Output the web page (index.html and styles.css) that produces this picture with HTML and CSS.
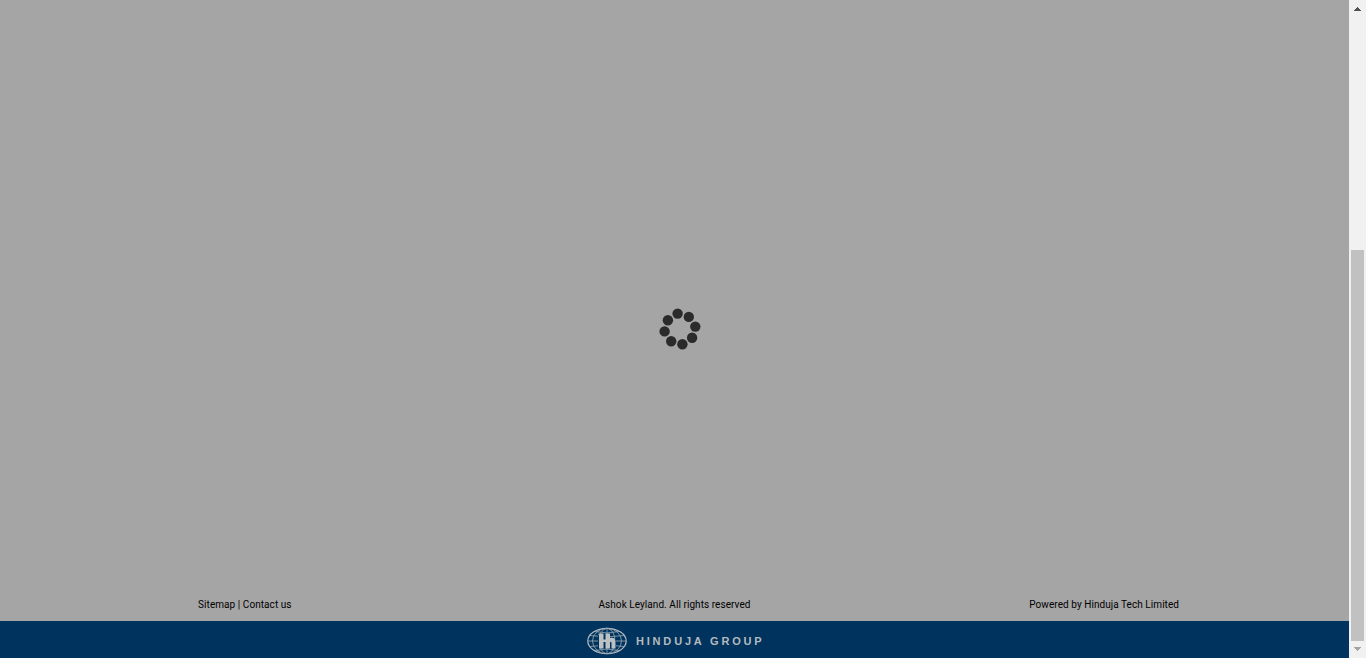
FILE: index.html
```html
<!DOCTYPE html>
<html lang="en">
<head>
<meta charset="utf-8">
<title>Ashok Leyland</title>
<link rel="stylesheet" href="styles.css">
</head>
<body>
<div class="page">
  <main class="content">
    <svg class="spinner" viewBox="0 0 60 60" role="img" aria-label="Loading">
      <circle cx="27.6" cy="13.6" r="5.2"/><circle cx="38.8" cy="16.9" r="5.2"/>
      <circle cx="45.3" cy="26.6" r="5.2"/><circle cx="42.1" cy="37.8" r="5.2"/>
      <circle cx="32.4" cy="44.3" r="5.2"/><circle cx="21.2" cy="41.2" r="5.2"/>
      <circle cx="14.6" cy="31.4" r="5.2"/><circle cx="17.9" cy="20.2" r="5.2"/>
    </svg>
  </main>
  <footer>
    <div class="links">
      <div><a>Sitemap</a> | <a>Contact us</a></div>
      <div>Ashok Leyland. All rights reserved</div>
      <div>Powered by Hinduja Tech Limited</div>
    </div>
    <div class="brand">
      <svg class="globe" viewBox="0 0 40 28">
        <g class="grid">
          <ellipse class="rim" cx="20" cy="14" rx="19.2" ry="12.7"/>
          <ellipse cx="20" cy="14" rx="14.5" ry="12.7"/>
          <ellipse cx="20" cy="14" rx="8" ry="12.7"/>
          <path d="M20 1v26M1 14h38M3 8.5q17 3 34 0M3 19.5q17-3 34 0M8 4.5q12 3 24 0M8 23.5q12-3 24 0"/>
        </g>
        <path class="halo" d="M14 7v14M20 7v14M14 14h6M26 12v9"/>
        <path class="mark" d="M11.5 6.5h5v6h2v-6h4.5v4.5q5.500-1 5.500 3.500v7h-4V15.500q-.75-1.500-1.500 0v6h-4.500v-6.500h-2v6.500h-4.500V8h-.5z"/>
      </svg>
      <span class="name">HINDUJA GROUP</span>
    </div>
  </footer>
</div>
<div class="scrollbar">
  <svg class="arrow" viewBox="0 0 17 17"><path d="M5 11h7v-1h-1V9h-1V8H9V7H8v1H7v1H6v1H5z"/></svg>
  <div class="track"><div class="thumb"></div></div>
  <svg class="arrow end" viewBox="0 0 17 17"><path d="M5 6h7v1h-1v1h-1v1H9v1H8V9H7V8H6V7H5z"/></svg>
</div>
</body>
</html>
```
FILE: styles.css
```css
body {
  margin: 0;
  height: 658px;
  display: flex;
  overflow: hidden;
  font-family: Roboto, sans-serif;
}
.page {
  flex: 1;
  display: flex;
  flex-direction: column;
  background: #a5a5a5;
}
.content {
  flex: 1;
  display: flex;
  justify-content: center;
  padding: 300px 0 0 11px;
}
.spinner {
  width: 60px;
  height: 60px;
  fill: #2b2b2b;
}
.links {
  display: grid;
  grid-template-columns: repeat(3, 1fr);
  padding: 0 30px 8px;
  font-size: 10px;
  line-height: 16px;
  letter-spacing: .06px;
  text-align: center;
  color: #000;
}
.brand {
  height: 37px;
  box-sizing: border-box;
  padding-left: 3px;
  display: flex;
  align-items: center;
  justify-content: center;
  gap: 8.5px;
  background: #00345f;
}
.globe {
  width: 40px;
  height: 28px;
  margin-top: 2px;
}
.grid {
  fill: none;
  stroke: #9aa9b5;
  stroke-width: .8;
}
.rim {
  stroke: #b4bcc2;
  stroke-width: 1.2;
}
.halo {
  fill: none;
  stroke: #00345f;
  stroke-width: 6;
}
.mark {
  fill: #bcc1c4;
}
.name {
  margin-top: 3px;
  font: bold 11px/14px "Liberation Sans", Arial, sans-serif;
  letter-spacing: 2.82px;
  color: #b5babe;
}
.scrollbar {
  width: 17px;
  display: flex;
  flex-direction: column;
  background: #f1f1f1;
}
.arrow {
  width: 17px;
  height: 17px;
  fill: #505050;
}
.end {
  fill: #a3a3a3;
}
.track {
  flex: 1;
  padding: 233px 2px 0;
}
.thumb {
  height: 391px;
  background: #c1c1c1;
}
```
